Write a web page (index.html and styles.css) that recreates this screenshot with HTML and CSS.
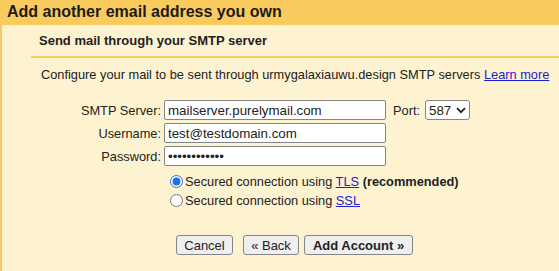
FILE: index.html
```html
<!DOCTYPE html>
<html lang="en">
<head>
    <meta charset="UTF-8">
    <title>Add another email address you own</title>
    <link rel="stylesheet" href="styles.css">
</head>
<body>
    <div class="title">Add another email address you own</div>
    <div class="panel">
        <div class="section">Send mail through your SMTP server</div>
        <p class="intro">Configure your mail to be sent through urmygalaxiauwu.design SMTP servers <a href="#">Learn more</a></p>

        <div class="form">
            <div class="row">
                <label class="label" for="smtp">SMTP Server:</label>
                <input class="field" id="smtp" type="text" value="mailserver.purelymail.com">
                <span class="port-label">Port:</span>
                <span class="select-wrap">
                    <select class="port">
                        <option>587</option>
                        <option>465</option>
                        <option>25</option>
                    </select>
                    <svg class="chevron" width="10" height="7" viewBox="0 0 10 7">
                        <polyline points="1,1.2 5,5.2 9,1.2" fill="none" stroke="#222" stroke-width="1.8"/>
                    </svg>
                </span>
            </div>
            <div class="row">
                <label class="label" for="user">Username:</label>
                <input class="field" id="user" type="text" value="test@testdomain.com">
            </div>
            <div class="row">
                <label class="label" for="pass">Password:</label>
                <input class="field" id="pass" type="password" value="xxxxxxxxxxxx">
            </div>
        </div>

        <div class="security">
            <label class="option"><input type="radio" name="sec" checked><span>Secured connection using <a href="#">TLS</a> <b>(recommended)</b></span></label>
            <label class="option"><input type="radio" name="sec"><span>Secured connection using <a href="#">SSL</a></span></label>
        </div>

        <div class="buttons">
            <button class="btn cancel">Cancel</button>
            <button class="btn back">&laquo; Back</button>
            <button class="btn primary">Add Account &raquo;</button>
        </div>
    </div>
</body>
</html>
```

FILE: styles.css
```css
html, body {
    margin: 0;
    height: 100%;
}
body {
    font-family: 'Liberation Sans', Arial, sans-serif;
    font-size: 12.8px;
    color: #222;
    background: #fef3d1;
    display: flex;
    flex-direction: column;
}
.title {
    background: #f9cb5e;
    height: 25px;
    line-height: 24px;
    padding-left: 7px;
    font-size: 16px;
    font-weight: bold;
    color: #1c1c1c;
}
.panel {
    flex: 1;
    border-left: 2px solid #f9cb5e;
}
.section {
    margin-left: 29px;
    padding: 8px 0 7px 8px;
    line-height: 16px;
    font-size: 13px;
    font-weight: bold;
    border-bottom: 2px solid #f9cb5e;
}
.intro {
    margin: 9px 0 0 39px;
    line-height: 16px;
}
a {
    color: #2222cc;
}
.form {
    margin-top: 17px;
    display: flex;
    flex-direction: column;
    gap: 3px;
}
.row {
    display: flex;
    align-items: center;
    height: 20px;
}
.label {
    width: 159px;
    text-align: right;
    margin-right: 3px;
}
.field {
    box-sizing: border-box;
    width: 222px;
    height: 20px;
    margin: 0;
    padding: 0 3px;
    border: 1px solid #858585;
    border-radius: 2px;
    background: white;
    font-family: inherit;
    font-size: 13.3px;
    color: #222;
    outline: none;
}
.port-label {
    margin-left: 7px;
    margin-right: 5px;
}
.select-wrap {
    position: relative;
    display: inline-block;
    height: 20px;
}
.port {
    appearance: none;
    -webkit-appearance: none;
    box-sizing: border-box;
    width: 45px;
    height: 20px;
    margin: 0;
    padding: 0 0 0 3px;
    border: 1px solid #858585;
    border-radius: 3px;
    background: white;
    font-family: inherit;
    font-size: 13.3px;
    color: #222;
}
.chevron {
    position: absolute;
    right: 4px;
    top: 7px;
    pointer-events: none;
}
.security {
    margin-top: 6px;
    padding-left: 168px;
}
.option {
    display: flex;
    align-items: center;
    height: 19px;
}
.option input {
    width: 13px;
    height: 13px;
    margin: 0 2px 0 0;
    accent-color: #1a73e8;
}
.buttons {
    margin: 25px 0 0 174px;
    display: flex;
}
.btn {
    box-sizing: border-box;
    height: 20px;
    padding: 0;
    border: 1px solid #858585;
    border-radius: 3px;
    background: #efefef;
    font-family: inherit;
    font-size: 13px;
    color: #222;
}
.cancel {
    width: 57px;
}
.back {
    width: 56px;
    margin-left: 10px;
}
.primary {
    width: 109px;
    margin-left: 5px;
    font-weight: bold;
}
```
